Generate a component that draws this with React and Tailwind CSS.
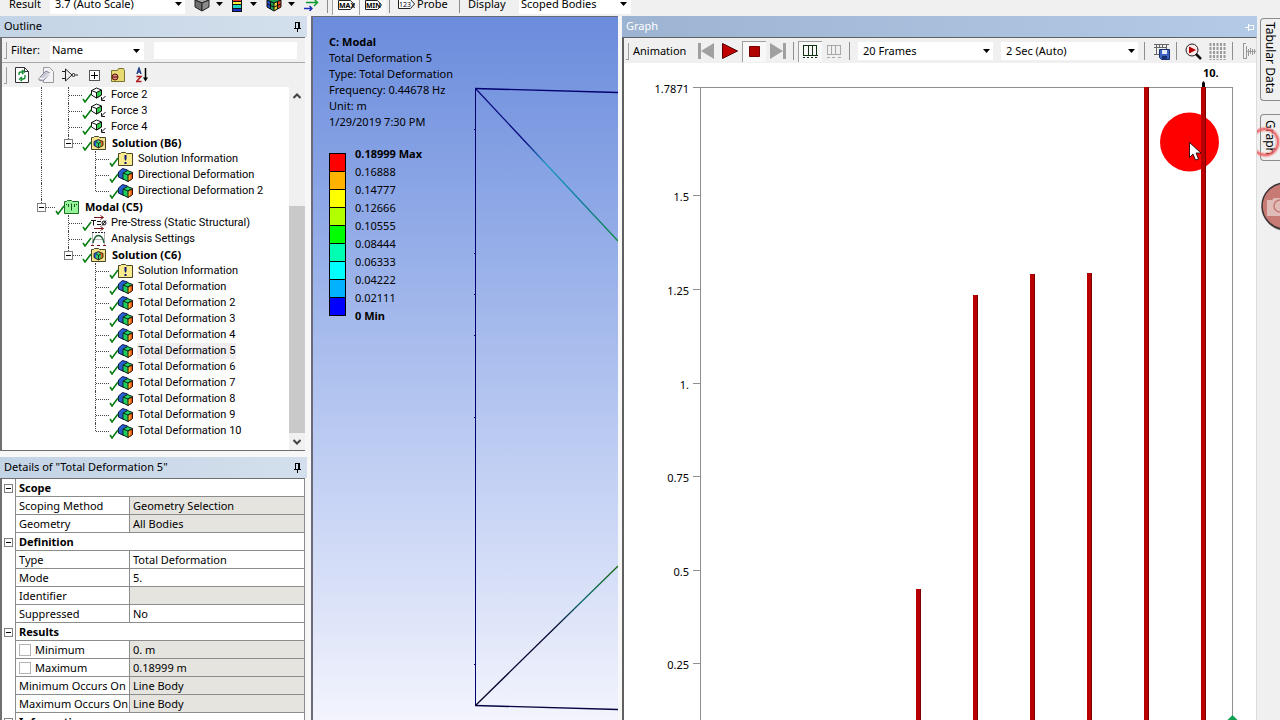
import React, { useState } from 'react';

const treeRows = [
  { label: 'Force 2', icon: 'force', lines: ['v', 't'] },
  { label: 'Force 3', icon: 'force', lines: ['v', 't'] },
  { label: 'Force 4', icon: 'force', lines: ['v', 't'] },
  { label: 'Solution (B6)', icon: 'solution', lines: ['v', 'l'], open: true },
  { label: 'Solution Information', icon: 'info', lines: ['v', '', 't'] },
  { label: 'Directional Deformation', icon: 'result', lines: ['v', '', 't'] },
  { label: 'Directional Deformation 2', icon: 'result', lines: ['v', '', 'l'] },
  { label: 'Modal (C5)', icon: 'modal', lines: ['l'], open: true },
  { label: 'Pre-Stress (Static Structural)', icon: 'prestress', lines: ['', 't'] },
  { label: 'Analysis Settings', icon: 'settings', lines: ['', 't'] },
  { label: 'Solution (C6)', icon: 'solution', lines: ['', 'l'], open: true },
  { label: 'Solution Information', icon: 'info', lines: ['', '', 't'] },
  { label: 'Total Deformation', icon: 'result', lines: ['', '', 't'] },
  { label: 'Total Deformation 2', icon: 'result', lines: ['', '', 't'] },
  { label: 'Total Deformation 3', icon: 'result', lines: ['', '', 't'] },
  { label: 'Total Deformation 4', icon: 'result', lines: ['', '', 't'] },
  { label: 'Total Deformation 5', icon: 'result', lines: ['', '', 't'] },
  { label: 'Total Deformation 6', icon: 'result', lines: ['', '', 't'] },
  { label: 'Total Deformation 7', icon: 'result', lines: ['', '', 't'] },
  { label: 'Total Deformation 8', icon: 'result', lines: ['', '', 't'] },
  { label: 'Total Deformation 9', icon: 'result', lines: ['', '', 't'] },
  { label: 'Total Deformation 10', icon: 'result', lines: ['', '', 'l'] },
];

const detailRows = [
  { group: 'Scope' },
  { name: 'Scoping Method', value: 'Geometry Selection', readOnly: true },
  { name: 'Geometry', value: 'All Bodies', readOnly: true },
  { group: 'Definition' },
  { name: 'Type', value: 'Total Deformation' },
  { name: 'Mode', value: '5.' },
  { name: 'Identifier', value: '', readOnly: true },
  { name: 'Suppressed', value: 'No' },
  { group: 'Results' },
  { name: 'Minimum', value: '0. m', readOnly: true, check: true },
  { name: 'Maximum', value: '0.18999 m', readOnly: true, check: true },
  { name: 'Minimum Occurs On', value: 'Line Body', readOnly: true },
  { name: 'Maximum Occurs On', value: 'Line Body', readOnly: true },
  { group: 'Information' },
];

const legendColors = [
  'bg-[#ff0000]',
  'bg-[#ffb200]',
  'bg-[#ffff00]',
  'bg-[#b2ff00]',
  'bg-[#00ff00]',
  'bg-[#00ffb2]',
  'bg-[#00ffff]',
  'bg-[#00b2ff]',
  'bg-[#0000ff]',
];

const legendLabels = [
  '0.18999 Max', '0.16888', '0.14777', '0.12666', '0.10555',
  '0.08444', '0.06333', '0.04222', '0.02111', '0 Min',
];

const ticks = [
  { label: '1.7871', y: 24 },
  { label: '1.5', y: 132 },
  { label: '1.25', y: 226 },
  { label: '1.', y: 320 },
  { label: '0.75', y: 413 },
  { label: '0.5', y: 507 },
  { label: '0.25', y: 600 },
];

const bars = [
  { x: 292, y: 526 },
  { x: 349, y: 232 },
  { x: 406, y: 211 },
  { x: 463, y: 210 },
  { x: 520, y: 24 },
  { x: 577, y: 24 },
];

const Caret = () => (
  <svg width="7" height="4" viewBox="0 0 7 4" className="shrink-0 pointer-events-none" aria-hidden="true">
    <path d="M0 0h7L3.5 4z" fill="#000" />
  </svg>
);

const Dropdown = ({ label, value, className }) => (
  <div className={`flex items-center shrink-0 bg-white pr-[3px] ${className}`}>
    <select aria-label={label} defaultValue={value} className="flex-1 min-w-0 h-full pl-[5px] appearance-none bg-transparent outline-none">
      <option>{value}</option>
    </select>
    <Caret />
  </div>
);

const Pin = () => (
  <button type="button" aria-label="Auto hide" className="w-4 h-4 flex items-center justify-center">
    <svg width="8" height="10" viewBox="0 0 8 10" shapeRendering="crispEdges">
      <path d="M0 6.500h7M1.500 6V0.500h4V6M4.500 1v5M3.500 6v4" fill="none" stroke="#000" />
    </svg>
  </button>
);

const PanelTitle = ({ children }) => (
  <div className="flex items-center justify-between h-[21px] shrink-0 pl-1 pr-px bg-gradient-to-r from-[#c3d4e6] to-[#d3dfec]">
    <h2>{children}</h2>
    <Pin />
  </div>
);

const Grip = () => <span className="w-[3px] h-[17px] shrink-0 border-r border-b border-[#a0a0a0]" />;
const Sep = () => <span className="w-px h-[18px] shrink-0 ml-[3px] mr-1 bg-[#8e8e8e]" />;

const ToolButton = ({ label, pressed, className = 'w-6', children }) => (
  <button
    type="button"
    aria-label={label}
    className={`h-[21px] shrink-0 flex items-center justify-center ${className} ${pressed ? 'bg-[#f8f8f8] border-t border-l border-[#a0a0a0]' : ''}`}
  >
    {children}
  </button>
);

const CubeIcon = ({ top, left, right }) => (
  <svg width="16" height="16" viewBox="0 0 16 16" className="shrink-0" aria-hidden="true">
    <path d="M1 4l7-3 7 3-7 3z" fill={top} stroke="#222" />
    <path d="M1 4l7 3v8l-7-4z" fill={left} stroke="#222" />
    <path d="M15 4l-7 3v8l7-4z" fill={right} stroke="#222" />
  </svg>
);

const Check = () => (
  <path d="M1 12l2 3 6-8" fill="none" stroke="#0a7d16" strokeWidth="1.6" />
);

const TreeIcon = ({ type }) => (
  <svg width="28" height="16" viewBox="0 0 28 16" className="shrink-0" aria-hidden="true">
    {type === 'force' && (
      <g>
        <path d="M9.5 3.5l5-2.5 5 2v5l-5 3-5-3z" fill="#fff" stroke="#111" />
        <path d="M14.5 5.5l5-2.5v5l-5 3z" fill="#35d04e" stroke="#111" />
        <path d="M9.5 3.5l5 2v5" fill="none" stroke="#111" />
        <path d="M23.5 9l-4 4M19.5 10v3.500h3.500" fill="none" stroke="#111" />
      </g>
    )}
    {type === 'solution' && (
      <g>
        <path d="M9.500 14.500v-12h2l1-1h4l1 1h6v12z" fill="#f5e58e" stroke="#4a4425" />
        <path d="M12 6.500l4.500-2v8.500l-4.500-2.500z" fill="#2a62d8" />
        <path d="M16.500 4.500l4.500 2v4l-4.500 2.500z" fill="#e8661b" />
        <path d="M14 7l2.500-1.500L19 7v4l-2.500 1.500L14 11z" fill="#35d06a" />
        <path d="M12 6.500l4.500-2 4.500 2v4l-4.500 2.500-4.500-2.500zM16.500 8.500v4M14 7l2.500 1.500L19 7" fill="none" stroke="#111" strokeWidth="0.800" />
      </g>
    )}
    {type === 'info' && (
      <g>
        <path d="M9.500 14.500v-12h2l1-1h4l1 1h6v12z" fill="#f8ec8c" stroke="#4a4425" />
        <path d="M15.500 4h2v4l-1 2-1-2z" fill="#10107a" />
        <path d="M15.500 11h2v2h-2z" fill="#10107a" />
      </g>
    )}
    {type === 'result' && (
      <g>
        <path d="M9.500 5l4-3.500 5 1.500v7l-4 2.500-5-2.500z" fill="#2a5fd0" stroke="#081445" />
        <path d="M14 6l4.500-2.500 5 2v6l-4.500 3-5-2.500z" fill="#1ccf63" stroke="#0b2a18" />
        <path d="M19 8l4.500-2.500v6l-4.500 3z" fill="#f5b52a" stroke="#3a1206" />
        <path d="M21.500 7.500l1.500-1v5l-1.500 1z" fill="#e8481a" />
        <path d="M14 6l5 2 4-2" fill="none" stroke="#0b2a18" />
      </g>
    )}
    {type === 'modal' && (
      <g>
        <path d="M9.500 14.500v-12h2l1-1h4l1 1h6v12z" fill="#96f39a" stroke="#176b22" />
        <path d="M13.500 5v3M16.500 4.500v7M19.500 5v3M11.500 5v1M21.500 5v1" stroke="#145a1d" />
      </g>
    )}
    {type === 'prestress' && (
      <g fill="none" stroke="#111">
        <path d="M9 5.500h5M11.500 5.500v5M15 6.500h4M15 9.500h4" />
        <circle cx="22" cy="8" r="2" />
        <path d="M20 10.500l4-5" />
        <path d="M12 2.500h9M18.500 0.500l3 2-3 2M12 13.500h9M18.500 11.500l3 2-3 2" stroke="#7b1414" />
      </g>
    )}
    {type === 'settings' && (
      <g fill="none">
        <path d="M10.500 1v13M22.500 1v13M10 8.500h13" stroke="#b5b5b5" />
        <path d="M10 1.500h13" stroke="#222" strokeDasharray="2 1" />
        <path d="M11 12c2-10 9-10 11 0" stroke="#1b5e34" strokeWidth="1.300" />
        <path d="M9 14.500h3M15 14.500h3M21 14.500h3" stroke="#7b1414" />
      </g>
    )}
    <Check />
  </svg>
);

const MinusBox = () => (
  <svg width="9" height="9" viewBox="0 0 9 9" shapeRendering="crispEdges" aria-hidden="true">
    <path d="M0.500 0.500h8v8h-8z" fill="#fff" stroke="#808080" />
    <path d="M2 4.500h5" stroke="#000" />
  </svg>
);

// One 27px indent cell: v = pass-through, t = branch, l = last branch
const Guide = ({ kind, box }) => (
  <span className="relative w-[27px] h-4 shrink-0 flex pl-[13px]">
    {kind && <span className={`border-l border-dotted border-[#444] ${kind === 'l' ? 'h-2' : 'h-4'}`} />}
    {(kind === 't' || kind === 'l') && <span className="flex-1 mt-2 border-t border-dotted border-[#444]" />}
    {box && <span className="absolute left-[9px] top-1"><MinusBox /></span>}
  </span>
);

const Outline = ({ selected, onSelect }) => (
  <section className="flex flex-col shrink-0">
    <PanelTitle>Outline</PanelTitle>
    <div className="mr-0.5 border-l-2 border-t border-[#707070] bg-[#f0f0f0]">
      <div className="flex items-center h-[25px] pt-px pl-0.5 border-b border-[#a8a8a8]">
        <Grip />
        <label htmlFor="filter" className="pl-1 w-[43px]">Filter:</label>
        <div className="flex items-center w-[94px] h-[18px] pr-1 bg-white">
          <select id="filter" defaultValue="Name" className="flex-1 min-w-0 pl-0.5 appearance-none bg-transparent outline-none">
            <option>Name</option>
            <option>Tag</option>
            <option>Type</option>
          </select>
          <Caret />
        </div>
        <input aria-label="Filter text" type="text" className="flex-1 min-w-0 h-[17px] ml-2.5 mr-2 bg-white outline-none" />
      </div>
      <div className="flex items-center h-6 pl-0.5">
        <Grip />
        <ToolButton label="Refresh" className="w-6 ml-[3px]">
          <svg width="14" height="16" viewBox="0 0 14 16">
            <path d="M0.500 0.500h9l4 4v11h-13z" fill="#fff" stroke="#333" />
            <path d="M9.500 0.500v4h4" fill="none" stroke="#333" />
            <path d="M4 8V6.500Q4 5 6 5h2M7 3l2.500 2L7 7M10 8v2q0 2-2 2H6M7 10l-2.500 2L7 14" fill="none" stroke="#0b8a2a" strokeWidth="1.300" />
          </svg>
        </ToolButton>
        <ToolButton label="Clear">
          <svg width="16" height="16" viewBox="0 0 16 16">
            <path d="M5.500 0.500h6l4 4v11h-10z" fill="#f4f4f6" stroke="#9a9a9a" />
            <path d="M1 11l7-7 4 2-7 8-4-1z" fill="#c9cbd6" stroke="#85889a" />
            <path d="M1 11l4 1 7-6" fill="none" stroke="#fff" />
          </svg>
        </ToolButton>
        <ToolButton label="Connections">
          <svg width="16" height="14" viewBox="0 0 16 14">
            <path d="M3.500 1v12l6.500-6zM0 3.500h3M0 10.500h3M13.500 7H16" fill="none" stroke="#222" />
            <circle cx="11.500" cy="7" r="1.500" fill="none" stroke="#222" />
          </svg>
        </ToolButton>
        <ToolButton label="Expand all">
          <svg width="11" height="11" viewBox="0 0 11 11" shapeRendering="crispEdges">
            <path d="M0.500 0.500h10v10h-10z" fill="#fff" stroke="#555" />
            <path d="M2 5.500h7M5.500 2v7" stroke="#000" />
          </svg>
        </ToolButton>
        <ToolButton label="Hide folders">
          <svg width="16" height="16" viewBox="0 0 16 16">
            <path d="M1.500 14.500v-11h6l1-2h5l1 2v11z" fill="#e6da71" stroke="#7d7430" />
            <circle cx="5" cy="10" r="3" fill="#e28a7a" stroke="#5b1010" />
            <path d="M2.500 10h5" stroke="#3c0808" />
          </svg>
        </ToolButton>
        <ToolButton label="Sort ascending">
          <svg width="12" height="16" viewBox="0 0 12 16">
            <path d="M1 7l2-6 2 6M1.500 5h3" fill="none" stroke="#1e3d86" strokeWidth="1.400" />
            <path d="M0.500 9.500h4.500l-4.500 5h5" fill="none" stroke="#b01818" strokeWidth="1.500" />
            <path d="M9.500 1v11" stroke="#000" strokeWidth="1.500" />
            <path d="M7 10.500h5l-2.500 4z" />
          </svg>
        </ToolButton>
      </div>
    </div>
    <div className="flex mr-0.5 h-[364px] border-l-2 border-b border-[#707070] bg-white">
      <ul className="flex-1 min-w-0 pl-[26px] leading-4">
        {treeRows.map((row, i) => (
          <li key={i} className="flex h-4">
            {row.lines.map((kind, j) => (
              <Guide key={j} kind={kind} box={row.open && j === row.lines.length - 1} />
            ))}
            <TreeIcon type={row.icon} />
            <button
              type="button"
              onClick={() => onSelect(row.label)}
              className={`whitespace-nowrap ${row.open ? 'px-0.5 font-bold' : "px-px font-['Roboto','Noto_Sans',sans-serif]"} ${selected === row.label ? 'bg-[#f0eef0]' : ''}`}
            >
              {row.label}
            </button>
          </li>
        ))}
      </ul>
      <div className="flex flex-col w-4 shrink-0 bg-[#f0f0f0]">
        <button type="button" aria-label="Scroll up" className="h-[17px] flex items-center justify-center">
          <svg width="8" height="6" viewBox="0 0 8 6"><path d="M0.500 5L4 1.500 7.500 5" fill="none" stroke="#444" strokeWidth="2" /></svg>
        </button>
        <div className="flex-1 flex flex-col justify-end">
          <div className="h-[227px] bg-[#c9c9c9]" />
        </div>
        <button type="button" aria-label="Scroll down" className="h-[17px] flex items-center justify-center">
          <svg width="8" height="6" viewBox="0 0 8 6"><path d="M0.500 1L4 4.500 7.500 1" fill="none" stroke="#444" strokeWidth="2" /></svg>
        </button>
      </div>
    </div>
  </section>
);

const Details = ({ selected }) => (
  <section className="flex flex-col flex-1 min-h-0 overflow-hidden mt-1.5">
    <PanelTitle>Details of "{selected}"</PanelTitle>
    <div className="mr-0.5 border-l-2 border-t border-[#707070] bg-white">
      <table className="w-full table-fixed border-separate border-spacing-0 leading-[17px]">
        <colgroup>
          <col className="w-[14px]" />
          <col className="w-[114px]" />
          <col />
        </colgroup>
        <tbody>
          {detailRows.map((row, i) => (
            row.group ? (
              <tr key={i} className="h-[18px]">
                <td className="p-0 border-r border-[#8c8c8c]">
                  <button type="button" aria-label={`Collapse ${row.group}`} className="flex pl-0.5"><MinusBox /></button>
                </td>
                <th colSpan={2} className="p-0 pl-[3px] text-left font-bold border-b border-r border-[#8c8c8c]">{row.group}</th>
              </tr>
            ) : (
              <tr key={i} className="h-[18px]">
                <td className="p-0 border-r border-[#8c8c8c]" />
                <th className="p-0 pl-[3px] text-left font-normal whitespace-nowrap border-b border-r border-[#8c8c8c]">
                  {row.check ? (
                    <label className="flex items-center gap-1">
                      <input type="checkbox" className="appearance-none w-3 h-3 border border-[#b4b4b4] bg-white" />
                      {row.name}
                    </label>
                  ) : row.name}
                </th>
                <td className={`p-0 pl-[3px] border-b border-r border-[#8c8c8c] ${row.readOnly ? 'bg-[#e5e4df]' : ''}`}>{row.value}</td>
              </tr>
            )
          ))}
        </tbody>
      </table>
    </div>
  </section>
);

const TopBar = () => (
  <header className="flex items-end h-4 shrink-0 overflow-hidden bg-[#f0f0f0]">
    <div className="flex items-center h-6 w-full shrink-0">
      <span className="w-[41px] ml-[9px]">Result</span>
      <Dropdown label="Result scale" value="3.7 (Auto Scale)" className="w-[135px] h-5" />
      <ToolButton label="Geometry" className="w-9 ml-[5px] gap-1.5">
        <CubeIcon top="#a9a9a9" left="#6e6e6e" right="#8b8b8b" />
        <Caret />
      </ToolButton>
      <ToolButton label="Contours" className="w-9 gap-2">
        <svg width="10" height="15" viewBox="0 0 10 15" shapeRendering="crispEdges">
          <path d="M0 0h10v4H0z" fill="#e33" />
          <path d="M0 4h10v3H0z" fill="#ffef3a" />
          <path d="M0 7h10v4H0z" fill="#23d3c3" />
          <path d="M0 11h10v4H0z" fill="#1c2fc0" />
          <path d="M0.500 0.500h9v14h-9zM0 4h10M0 7.500h10M0 11h10" fill="none" stroke="#111" />
        </svg>
        <Caret />
      </ToolButton>
      <ToolButton label="Edges" className="w-9 gap-1.5">
        <svg width="16" height="16" viewBox="0 0 16 16">
          <path d="M1 4l7-3 7 3v7l-7 4-7-4z" fill="#18a052" />
          <path d="M1 4l4 2v7l-4-2z" fill="#2547c9" />
          <path d="M11 6l4-2v7l-4 2z" fill="#e0451c" />
          <path d="M8 7l3-1v7l-3 2z" fill="#e8d532" />
          <path d="M1 4l7-3 7 3v7l-7 4-7-4zM1 4l7 3 7-3M8 7v8M4.500 5.500v7.500M11.500 5.500v7.500M1 8l7 3 7-3" fill="none" stroke="#111" />
        </svg>
        <Caret />
      </ToolButton>
      <ToolButton label="Vectors" className="w-[26px]">
        <svg width="16" height="14" viewBox="0 0 16 14">
          <path d="M3 5.500h11M11 2l3.500 3.500L11 9" fill="none" stroke="#0c9a2c" strokeWidth="1.400" />
          <path d="M1 11.500h8M6.500 9l2.500 2.500L6.500 14" fill="none" stroke="#1a2fb8" strokeWidth="1.400" />
        </svg>
      </ToolButton>
      <Sep />
      <ToolButton label="Maximum" pressed className="w-[27px]">
        <svg width="17" height="10" viewBox="0 0 17 10"><path d="M0.500 0.500h12l4 4.500-4 4.500h-12z" fill="#fff" stroke="#222" /><text x="1" y="8" fontSize="7" fontWeight="bold">MAX</text></svg>
      </ToolButton>
      <ToolButton label="Minimum" pressed className="w-[27px]">
        <svg width="17" height="10" viewBox="0 0 17 10"><path d="M0.500 0.500h12l4 4.500-4 4.500h-12z" fill="#fff" stroke="#222" /><text x="1" y="8" fontSize="7" fontWeight="bold">MIN</text></svg>
      </ToolButton>
      <Sep />
      <button type="button" className="flex items-center gap-0.5 pl-1 w-[62px]">
        <svg width="17" height="10" viewBox="0 0 17 10"><path d="M0.500 0.500h12l4 4.500-4 4.500h-12z" fill="#fff" stroke="#222" /><text x="1" y="8" fontSize="7">123</text></svg>
        Probe
      </button>
      <Sep />
      <label htmlFor="display" className="w-[55px] pl-1">Display</label>
      <div className="flex items-center w-[112px] h-5 bg-white pr-1">
        <select id="display" defaultValue="Scoped Bodies" className="flex-1 min-w-0 pl-0.5 appearance-none bg-transparent outline-none">
          <option>Scoped Bodies</option>
        </select>
        <Caret />
      </div>
    </div>
  </header>
);

const Viewport = () => (
  <section className="relative w-[307px] shrink-0 overflow-hidden border-l-2 border-t border-[#6a6a78] bg-gradient-to-b from-[#6b8cdc] to-[#f3f4fd] leading-4">
    <svg className="absolute inset-0 w-full h-full" aria-hidden="true">
      <defs>
        <linearGradient id="brace-top" x1="0" y1="0" x2="1" y2="1">
          <stop offset="0.350" stopColor="#0a0a80" />
          <stop offset="0.500" stopColor="#1899c4" />
          <stop offset="0.750" stopColor="#0a7a96" />
          <stop offset="1" stopColor="#0c8a3a" />
        </linearGradient>
        <linearGradient id="brace-bottom" x1="0" y1="1" x2="1" y2="0">
          <stop offset="0.550" stopColor="#050530" />
          <stop offset="0.750" stopColor="#0a6a72" />
          <stop offset="1" stopColor="#1a6a10" />
        </linearGradient>
      </defs>
      <path d="M162.500 72v617" stroke="#00006e" />
      <path d="M162 71.500l143 4" stroke="#00006e" strokeWidth="1.300" />
      <path d="M162 688.500l143 4" stroke="#050540" strokeWidth="1.300" />
      <path d="M162.500 71.500L305 224" stroke="url(#brace-top)" strokeWidth="1.300" />
      <path d="M162.500 688.500L305 549" stroke="url(#brace-bottom)" strokeWidth="1.300" />
      <path d="M161 112.500h2M161 236.500h2M161 277.500h2M161 318.500h2M161 400.500h2M161 647.500h2" stroke="#00006e" />
    </svg>
    <div className="relative pl-4 pt-[17px]">
      <p className="font-bold">C: Modal</p>
      <p>Total Deformation 5</p>
      <p>Type: Total Deformation</p>
      <p>Frequency: 0.44678 Hz</p>
      <p>Unit: m</p>
      <p>1/29/2019 7:30 PM</p>
      <div className="flex mt-[15px]">
        <div className="flex flex-col w-[17px] h-[163px] mt-2 border border-black divide-y divide-black">
          {legendColors.map((color) => (
            <span key={color} className={`flex-1 ${color}`} />
          ))}
        </div>
        <ul className="flex flex-col justify-between h-[178px] pl-[9px]">
          {legendLabels.map((label, i) => (
            <li key={label} className={`leading-[18px] ${i === 0 || i === 9 ? 'font-bold' : ''}`}>{label}</li>
          ))}
        </ul>
      </div>
    </div>
  </section>
);

const GraphToolbar = () => (
  <div className="flex items-center h-[25px] shrink-0 pt-px pl-0.5 overflow-hidden bg-[#f0f0f0]">
    <Grip />
    <span className="w-[65px] pl-1 shrink-0">Animation</span>
    <ToolButton label="Previous frame">
      <svg width="16" height="16" viewBox="0 0 16 16"><path d="M0 0h3v16H0zM16 0v16L3 8z" fill="#a0a0a0" /></svg>
    </ToolButton>
    <ToolButton label="Play">
      <svg width="16" height="16" viewBox="0 0 16 16"><path d="M0.500 0.500L15.500 8l-15 7.500z" fill="#c00000" stroke="#500" /></svg>
    </ToolButton>
    <ToolButton label="Stop" pressed>
      <svg width="11" height="11" viewBox="0 0 11 11"><path d="M0.500 0.500h10v10h-10z" fill="#b00000" stroke="#700" /></svg>
    </ToolButton>
    <ToolButton label="Next frame">
      <svg width="16" height="16" viewBox="0 0 16 16"><path d="M0 0v16l13-8zM13 0h3v16h-3z" fill="#a0a0a0" /></svg>
    </ToolButton>
    <Sep />
    <ToolButton label="Distributed" pressed>
      <svg width="15" height="13" viewBox="0 0 15 13" shapeRendering="crispEdges">
        <path d="M0.500 0v10M5.500 0v10M9.500 0v10M13.500 0v10M0 10.500h15M0 0.500h14M0 12.500h2M4 12.500h2M8 12.500h2M12 12.500h2" fill="none" stroke="#123012" />
      </svg>
    </ToolButton>
    <ToolButton label="Result sets">
      <svg width="14" height="13" viewBox="0 0 14 13" shapeRendering="crispEdges">
        <path d="M0.500 0v10M0 0.500h14M4.500 0v10M8.500 0v10M13.500 0v10M0 9.500h14M0 12.500h3M5 12.500h3M11 12.500h3" fill="none" stroke="#a8a8a8" />
      </svg>
    </ToolButton>
    <Sep />
    <Dropdown label="Frames" value="20 Frames" className="w-[135px] h-[18px] ml-1" />
    <Dropdown label="Duration" value="2 Sec (Auto)" className="w-[137px] h-[18px] ml-2" />
    <span className="w-[3px] shrink-0" />
    <Sep />
    <ToolButton label="Export video">
      <svg width="17" height="17" viewBox="0 0 17 17">
        <path d="M1 1.500h15M3.500 1v11M13.500 1v5M1 4.500h12M1 11.500h5M6.500 1v3M9.500 1v3" fill="none" stroke="#666" />
        <path d="M6.500 6.500h10v10h-8l-2-2z" fill="#3c62c4" stroke="#18306e" />
        <path d="M9 7h5v4H9z" fill="#e7ecf8" />
        <path d="M9 13h5v3H9z" fill="#18306e" />
      </svg>
    </ToolButton>
    <Sep />
    <ToolButton label="Zoom to result">
      <svg width="17" height="17" viewBox="0 0 17 17">
        <circle cx="7" cy="7" r="6" fill="#fbeaea" stroke="#222" />
        <path d="M4 3.500L11 7l-7 3.500z" fill="#b80000" />
        <path d="M11 11l5 5" stroke="#111" strokeWidth="2.500" />
      </svg>
    </ToolButton>
    <ToolButton label="Grid">
      <svg width="17" height="17" viewBox="0 0 17 17">
        <path d="M1.500 0v17M5 0v17M8.500 0v17M12 0v17M15.500 0v17" stroke="#9a9a9a" strokeWidth="2" strokeDasharray="3 1" />
      </svg>
    </ToolButton>
    <Sep />
    <ToolButton label="Waveform" className="w-6 pl-1">
      <svg width="16" height="16" viewBox="0 0 16 16" shapeRendering="crispEdges">
        <path d="M0.500 0v15M3.500 3v12M0 0.500h3M0 15.500h4M5.500 6v7M7.500 5v6M4 8.500h12M9.500 6v6M11.500 6v5M13.500 7v3" fill="none" stroke="#999" />
      </svg>
    </ToolButton>
  </div>
);

const Chart = () => (
  <svg className="flex-1 w-full min-h-0 bg-white" role="img" aria-label="Frequency by mode">
    <path d="M69 24.500h539M76.500 24v640M608.500 24v640" stroke="#909090" fill="none" />
    <g fontSize="11" textAnchor="end">
      {ticks.map((tick) => (
        <g key={tick.label}>
          <path d={`M69 ${tick.y + 0.5}h7`} stroke="#909090" />
          <text x="65" y={tick.y + 6}>{tick.label}</text>
        </g>
      ))}
    </g>
    <circle cx="565.5" cy="79" r="29.5" fill="#ff0000" />
    {bars.map((bar) => (
      <g key={bar.x}>
        <rect x={bar.x} y={bar.y} width="5" height="100%" fill="#b90000" />
        <path d={`M${bar.x + 4.5} ${bar.y}v700`} stroke="#7c0000" />
      </g>
    ))}
    <path d="M578 24v-4l1.500-2 1.500 2v4z" />
    <text x="579" y="14" fontSize="11" fontWeight="bold">10.</text>
    <path d="M565.500 79.500v15l3.500-3.500 2.500 6 3-1-2.500-6h5z" fill="#fff" stroke="#000" strokeWidth="0.800" />
    <path d="M608.500 652l6 6-6 6-6-6z" fill="#10a050" />
  </svg>
);

const Graph = () => (
  <section className="flex flex-col flex-1 min-w-0 ml-1">
    <div className="flex items-center justify-between h-[21px] shrink-0 pl-1 bg-gradient-to-r from-[#9cb3d1] to-[#b4cbe8] text-white">
      <h2>Graph</h2>
      <button type="button" aria-label="Dock" className="w-3 h-3 flex items-center">
        <svg width="9" height="8" viewBox="0 0 9 8" shapeRendering="crispEdges"><path d="M0 4.500h3M3.500 1v7M3 2.500h5v4H3" fill="none" stroke="#fff" /></svg>
      </button>
    </div>
    <div className="flex flex-col flex-1 min-h-0 border-l-2 border-t border-r border-l-[#606060] border-t-[#606060] border-r-[#dcdcdc]">
      <GraphToolbar />
      <Chart />
    </div>
  </section>
);

const SideTabs = () => (
  <aside className="relative flex flex-col gap-[13px] w-[23px] shrink-0 pt-0.5 pl-[3px] overflow-hidden bg-[#f0f0f0] text-[12px] leading-4">
    <button type="button" className="h-[83px] pr-0.5 pb-1 border border-r-0 border-[#8c8c8c] rounded-l-sm [writing-mode:vertical-rl] flex items-center justify-center">Tabular Data</button>
    <button type="button" className="h-[47px] pr-0.5 border border-r-0 border-[#8c8c8c] rounded-l-sm [writing-mode:vertical-rl] flex items-center justify-center">Graph</button>
    <svg className="absolute left-0 top-0 w-full h-60 pointer-events-none" aria-hidden="true">
      <circle cx="8" cy="126" r="13" fill="none" stroke="#f26a6a" strokeOpacity="0.35" strokeWidth="5" />
      <circle cx="8" cy="126" r="13" fill="none" stroke="#ee5c62" strokeOpacity="0.8" strokeWidth="2" />
      <circle cx="29" cy="191" r="24" fill="#777" />
      <circle cx="28" cy="190" r="23" fill="#c87a74" stroke="#3c3434" strokeWidth="1.5" />
      <path d="M10 184h5l2-2h10v18H10z" fill="#e0bcb8" />
      <circle cx="23" cy="190" r="6" fill="none" stroke="#c87a74" strokeWidth="1.5" />
    </svg>
  </aside>
);

const App = () => {
  const [selected, setSelected] = useState('Total Deformation 5');

  return (
    <div className="flex flex-col h-screen overflow-hidden bg-[#f7f7f7] text-black text-[11px] font-['Noto_Sans','Open_Sans',sans-serif]">
      <TopBar />
      <main className="flex flex-1 min-h-0">
        <div className="flex flex-col w-[307px] shrink-0 mr-1 min-h-0">
          <Outline selected={selected} onSelect={setSelected} />
          <Details selected={selected} />
        </div>
        <Viewport />
        <Graph />
        <SideTabs />
      </main>
    </div>
  );
};

export default App;
